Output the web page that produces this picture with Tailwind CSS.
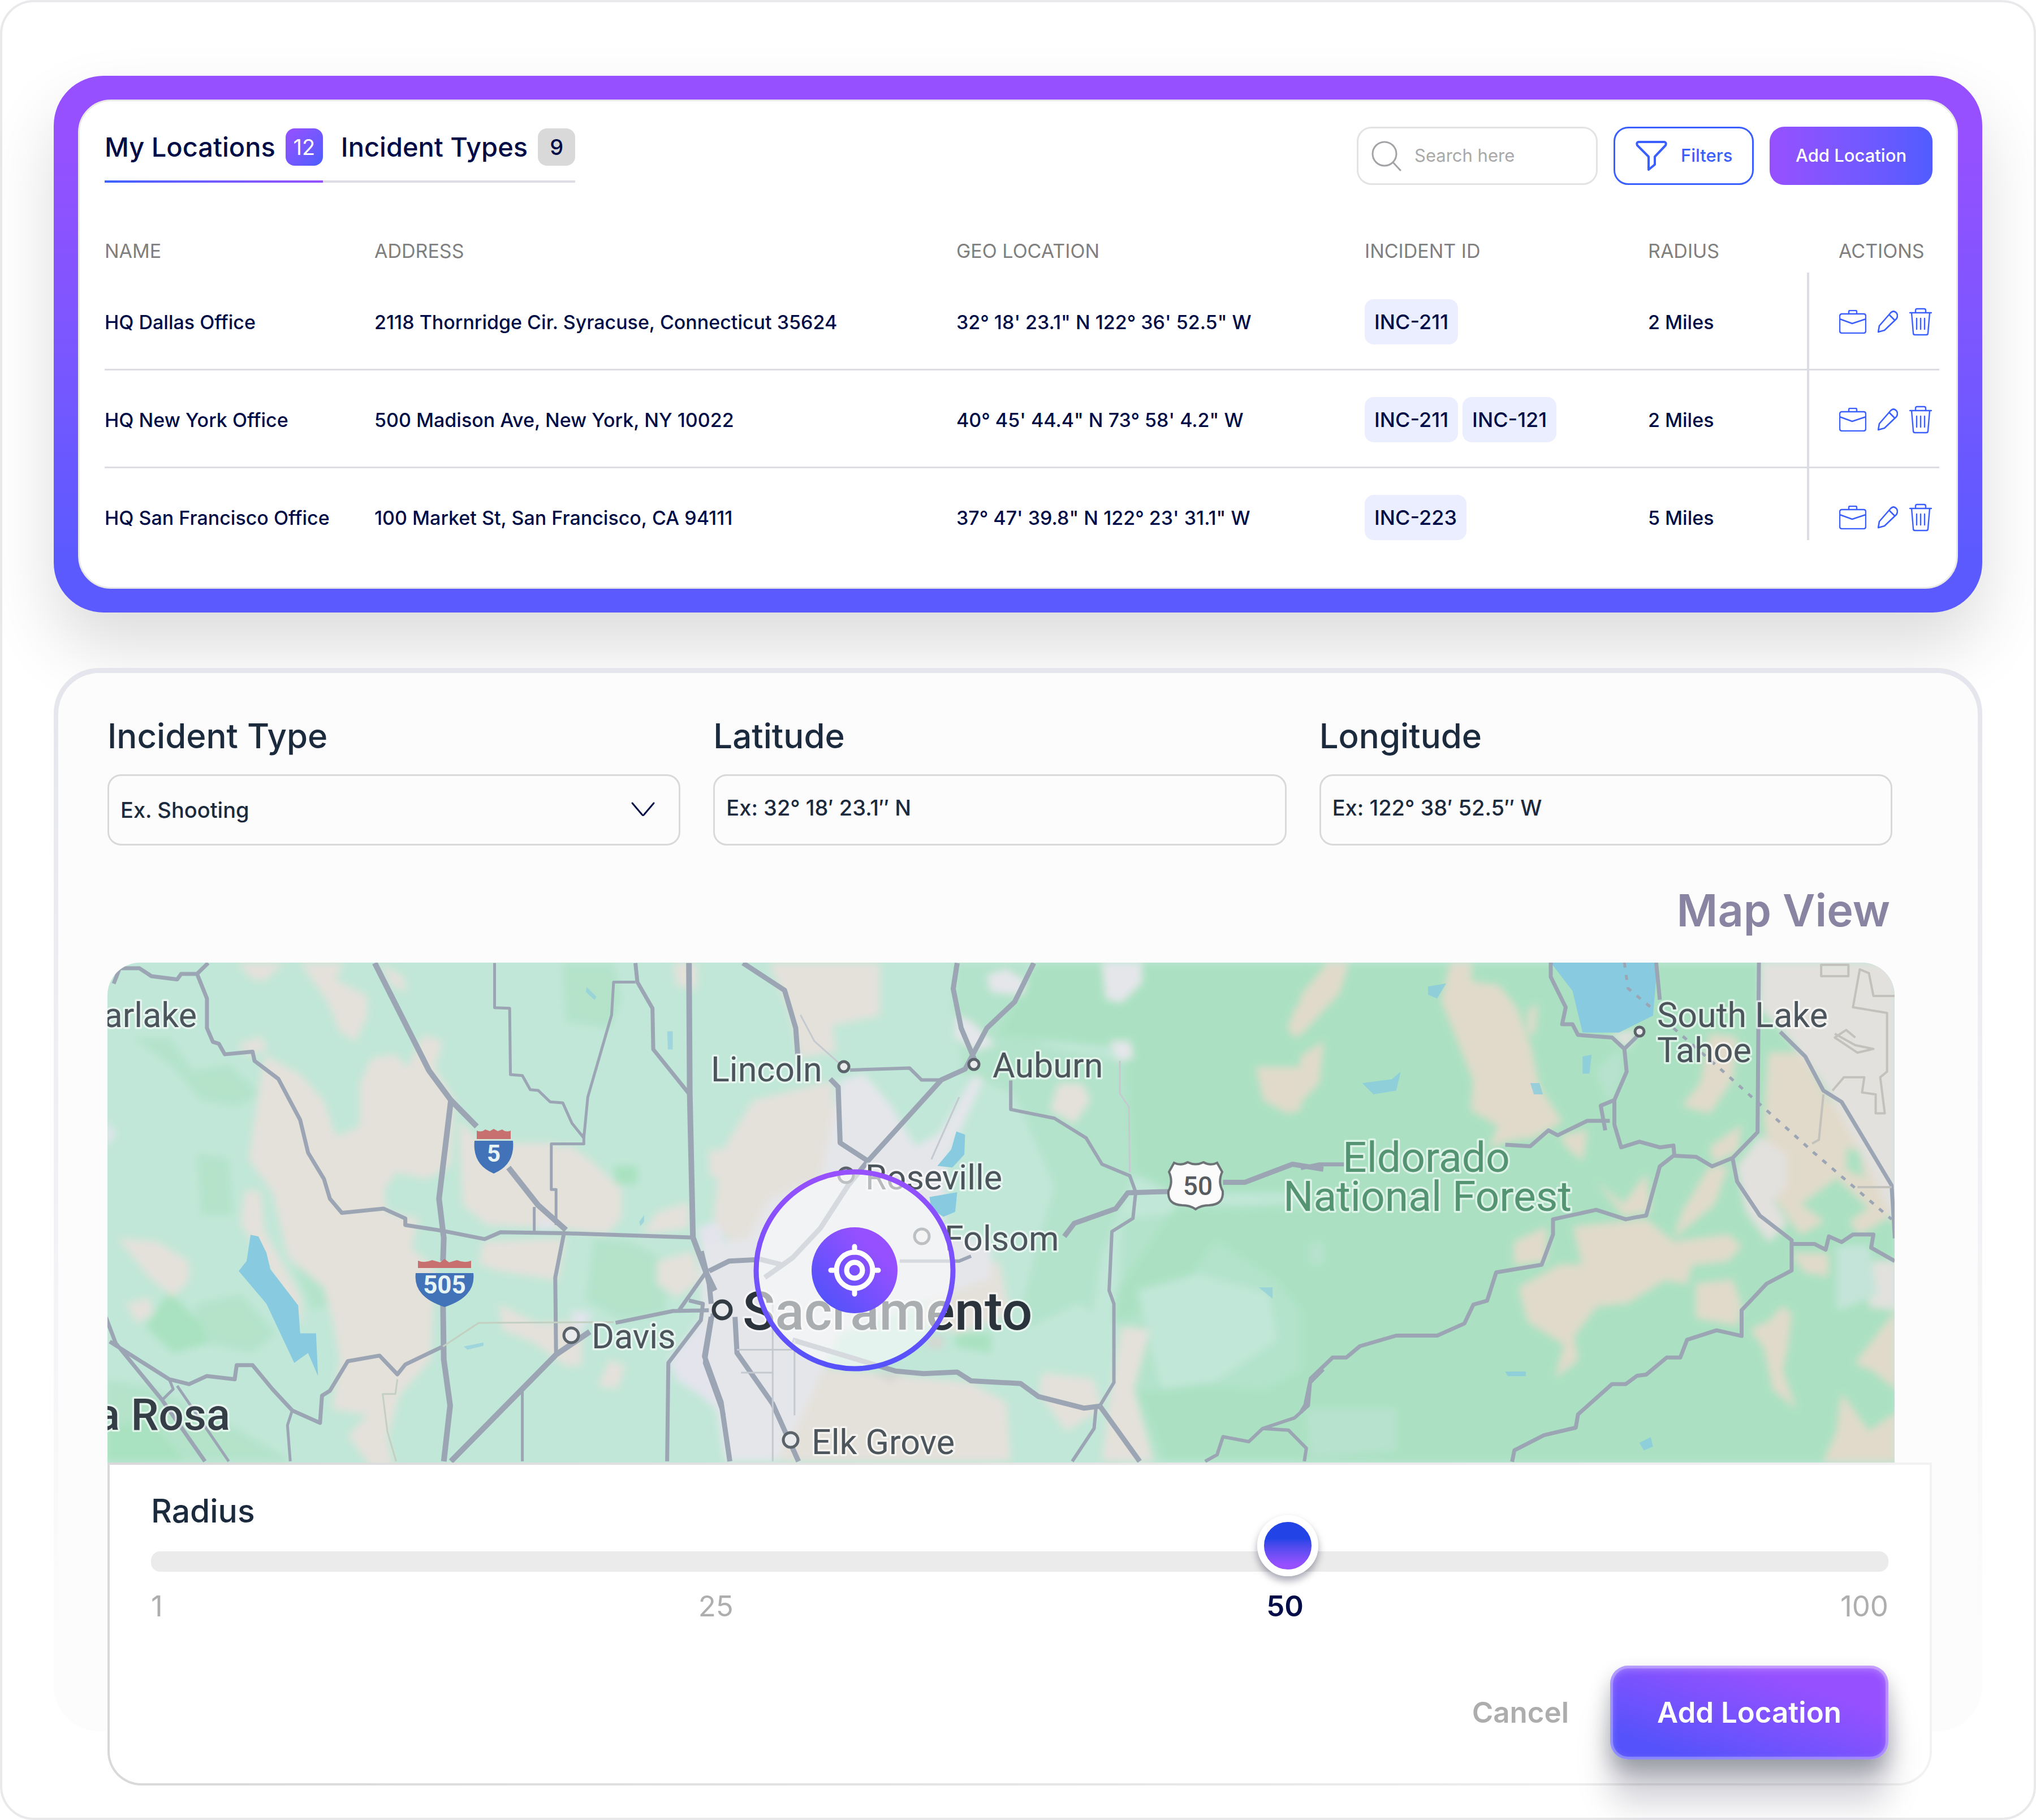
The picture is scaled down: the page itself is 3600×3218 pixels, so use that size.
<!DOCTYPE html>
<html lang="en">
<head>
    <meta charset="UTF-8">
    <meta name="viewport" content="width=device-width, initial-scale=1.0">
    <title>My Locations</title>
    <script src="https://cdn.jsdelivr.net/npm/@tailwindcss/browser@4"></script>
</head>
<body class="bg-white font-['Inter',sans-serif] text-[#000c47]">

    <!-- Shared icons -->
    <svg class="hidden">
        <symbol id="icon-case" viewBox="0 0 48 42">
            <path d="M17 6V3q0-2 2-2h10q2 0 2 2v3M5 7h38q4 0 4 4v26q0 4-4 4H5q-4 0-4-4V11q0-4 4-4zM1 16l22 8 24-8" fill="none" stroke="currentColor" stroke-width="2.4" stroke-linejoin="round"/>
        </symbol>
        <symbol id="icon-pencil" viewBox="0 0 36 40">
            <path d="M1 38l2-11L23 4q5-5 10 0 4 5 0 11L12 35zM21 8l9 9" fill="none" stroke="currentColor" stroke-width="2.6" stroke-linejoin="round"/>
        </symbol>
        <symbol id="icon-trash" viewBox="0 0 40 50">
            <path d="M1 9h38M11 9V5q0-3 3-3h12q3 0 3 3v4M4 9l3 36q0 3 3 3h20q3 0 3-3l3-36M13 19v19M20 19v19M27 19v19" fill="none" stroke="currentColor" stroke-width="2.4" stroke-linecap="round"/>
        </symbol>
    </svg>

    <div class="flex min-h-screen flex-col gap-[98px] rounded-[60px] border-4 border-[#e9e9ec] px-[91px] pt-[130px] pb-[153px]">

        <!-- Locations card -->
        <section class="rounded-[88px] bg-linear-to-b from-[#9750ff] from-10% to-[#5a5aff] to-90% px-[43px] py-[42px] shadow-[0_60px_120px_rgba(0,0,0,0.14)]">
            <div class="rounded-[58px] border-3 border-[#e8e8e8] bg-white pt-[45px] pr-[30px] pb-[83px] pl-[44px]">
                <div class="flex items-start justify-between pr-3">
                    <!-- Tabs -->
                    <div class="flex pt-[3px] text-[47px] leading-[66px] font-medium">
                        <button class="relative flex gap-[18px] border-b-3 border-transparent pb-[27px]">
                            My Locations
                            <span class="w-[66px] rounded-2xl bg-linear-to-br from-[#9750ff] to-[#4a5cff] text-center text-[38px] font-normal text-white">12</span>
                            <span class="absolute inset-x-0 -bottom-[3px] h-1 bg-linear-to-r from-[#3b62ff] to-[#9750ff]"></span>
                        </button>
                        <button class="flex gap-[18px] border-b-4 border-[#dcdce4] pb-[26px] pl-8">
                            Incident Types
                            <span class="w-[66px] rounded-2xl bg-[#d9d9d9] text-center text-[38px] font-medium">9</span>
                        </button>
                    </div>

                    <!-- Toolbar -->
                    <div class="flex h-[103px] gap-7 text-[31px]">
                        <label class="flex w-[426px] items-center gap-[23px] rounded-[26px] border-3 border-[#e3e3e3] pl-[22px]">
                            <svg class="h-[54px] w-[54px] shrink-0 text-[#a1a3a7]" viewBox="0 0 54 54" fill="none" stroke="currentColor" stroke-width="3" stroke-linecap="round">
                                <circle cx="24" cy="23" r="21"/>
                                <path d="M39 38l13 14"/>
                            </svg>
                            <input type="search" aria-label="Search" placeholder="Search here" class="w-full min-w-0 outline-none placeholder:text-[#a9a9a9]">
                        </label>
                        <button class="flex w-[248px] items-center gap-6 rounded-[26px] border-3 border-[#3b5fff] pl-[36px] font-medium text-[#3b5fff]">
                            <svg class="h-[54px] w-[56px]" viewBox="0 0 56 54" fill="none" stroke="currentColor" stroke-width="4" stroke-linejoin="round">
                                <path d="M5 2h46q4 1 2 6L34 28v14l-11 9V28L3 8q-2-5 2-6z"/>
                            </svg>
                            Filters
                        </button>
                        <button class="w-[288px] rounded-[26px] bg-linear-to-r from-[#9750ff] to-[#505cff] font-medium text-white">Add Location</button>
                    </div>
                </div>

                <table class="mt-[77px] w-full table-fixed border-separate border-spacing-0 text-left text-[34px] font-medium">
                    <thead>
                        <tr class="h-[78px] text-[#7f7f7f]">
                            <th class="w-[477px] font-normal">NAME</th>
                            <th class="font-normal">ADDRESS</th>
                            <th class="w-[722px] font-normal">GEO LOCATION</th>
                            <th class="w-[501px] font-normal">INCIDENT ID</th>
                            <th class="w-[281px] font-normal">RADIUS</th>
                            <th class="w-[234px] pl-[56px] font-normal">ACTIONS</th>
                        </tr>
                    </thead>
                    <tbody id="locations"></tbody>
                </table>
            </div>
        </section>

        <!-- Add location card -->
        <section class="rounded-[80px] bg-linear-to-b from-[#e5e5ed] to-[#fcfcfc] to-90% px-2 pt-[9px] pb-2">
            <div class="flex flex-col rounded-[72px] bg-[#fcfcfc] pt-[75px] pr-[81px] pl-[87px] text-[#1b2a3d]">
                <div class="mr-[70px] grid grid-cols-3 gap-[58px] text-[38px] font-medium">
                    <div>
                        <label for="incident-type" class="block text-[60px] leading-[72px]">Incident Type</label>
                        <div class="relative mt-8">
                            <select id="incident-type" class="h-[126px] w-full appearance-none rounded-[24px] border-3 border-[#d9d9d9] px-5 outline-none">
                                <option>Ex. Shooting</option>
                            </select>
                            <svg class="pointer-events-none absolute top-[48px] right-[44px] h-7 w-11" viewBox="0 0 44 28" fill="none" stroke="#000c47" stroke-width="3" stroke-linecap="round" stroke-linejoin="round">
                                <path d="M3 3l17 20q2 3 4 0L41 3"/>
                            </svg>
                        </div>
                    </div>
                    <div>
                        <label for="latitude" class="block text-[60px] leading-[72px]">Latitude</label>
                        <input id="latitude" type="text" placeholder="Ex: 32° 18′ 23.1″ N" class="mt-8 h-[126px] w-full rounded-[24px] border-3 border-[#d9d9d9] px-5 pb-2 outline-none placeholder:text-[#1b2a3d]">
                    </div>
                    <div>
                        <label for="longitude" class="block text-[60px] leading-[72px]">Longitude</label>
                        <input id="longitude" type="text" placeholder="Ex: 122° 38′ 52.5″ W" class="mt-8 h-[126px] w-full rounded-[24px] border-3 border-[#d9d9d9] px-5 pb-2 outline-none placeholder:text-[#1b2a3d]">
                    </div>
                </div>

                <h2 class="mt-[66px] mr-[74px] text-right text-[79px] leading-[96px] font-semibold text-[#8a84a3]">Map View</h2>

                <!-- Map -->
                <div class="mt-[45px] mr-[66px] overflow-hidden rounded-t-[58px]">
                    <svg class="block w-full" viewBox="0 0 3160 884" font-family="Roboto, sans-serif">
                        <defs>
                            <filter id="soft" x="-5%" y="-5%" width="110%" height="110%"><feGaussianBlur stdDeviation="7"/></filter>
                            <linearGradient id="pin" x1="1" y1="0" x2="0" y2="1">
                                <stop offset=".25" stop-color="#9750ff"/>
                                <stop offset=".85" stop-color="#5552fb"/>
                            </linearGradient>
                            <linearGradient id="ring" x1="0" y1="0" x2="0" y2="1">
                                <stop offset="0" stop-color="#9750ff"/>
                                <stop offset="1" stop-color="#5552fb"/>
                            </linearGradient>
                        </defs>
                        <rect width="3160" height="884" fill="#c1e7d8"/>

                        <!-- Land cover -->
                        <g filter="url(#soft)">
                            <g transform="matrix(.7015 0 0 .5804 -10 -12)">
                                <path fill="#b4e3ca" d="M80 250l90 0 60 100 90-20 80 90-60 40-90-20-70-100zM240 600l80 20 10 170-80 0zM490 780l110 40 20 230-90 30-40-120zM1160 22h130l20 110-30 90-110-20zM1240 860l90 10 100 60-10 160-110 20-90-60zM240 1060l110-30 90 120-60 60-150-40zM10 1290l100 20 230 130 140 100H10z"/>
                                <path fill="#a9e2c0" d="M110 1130l60-110 80 100 20 60-90 30zM10 1440l110-30 90 130H10zM1290 640h60v55h-55zM620 1250l60-15 10 40-50 5z"/>
                                <path fill="#e4e1da" d="M340 22h120l-50 55-30-5zM500 22h110l-20 50 80 50 0 60-30 80-40-30-30-90zM700 22l60 40 10 50-40-20zM340 270l60-25 20 40-50 20zM410 300l90 60 60 80 30 110 60-30 0-130 30-80 60-10 30 40 40-100 50 20-20 80 50 100-10 200-60 40-80-20-30 60 10 60 80 20-20 90 60 60-10 280-80 110-30 130 20 120-60-30-60-100 50-60-90-20 20-150-20-130-20-90-90-90-40-200-60-100zM360 715l40 0 10 120 90 200 10 90-40-70-70-140-50-100zM40 860l100 10 80 60 0 60-40 50-60-60zM60 1060l60-20 10 50-40 30zM900 500l50 60 100 10 60 0 30 0 30 20 0-20 60 50 80 90 0 90-40 50-120-20-180-10-60-60zM960 870l210-10-20 130-150-30-50-20zM1000 1060l100 60 110-10 0 140-40 0-80-70-80-40zM1280 1230l40 20-20 70-50-10zM1400 780l80-30v80l-120 20zM1440 22h60v80l-50-10zM1530 590l38 0v110l-38-40zM1400 930l90-30 20 90-60 50-50-40z"/>
                                <path fill="#e3e4ec" d="M10 500l25 40-25 50zM1500 830l68-30v600l-60-60-60-50-20-60 80-120 30-100zM1180 1080l60 10-40 60zM1110 790l40 40-50 5z"/>
                            </g>
                            <g transform="matrix(.7015 0 0 .5804 1050 -12)">
                                <path fill="#b4e3cb" d="M640 22h180l-40 200 110 60 180 40 20 350-80 240-50 360-110-20-40-200 80-350-100-280-160-80zM1060 800l500-60v800h-520z"/>
                                <path fill="#abe1c2" d="M840 22h728v700l-380 0-100-60-20-380-320-40zM1200 760l368 10v400l-120-180-150-120-60 100-120 110-80 40 10-100 110-200zM1100 1330l120-30 200 20 148-100v320h-400z"/>
                                <path fill="#c1e7d8" d="M340 210h300l20 130-160 130-120-130zM780 1160l170-100 90 60-10 160-150 10zM1100 1020l150-50 180 60 20 140-160 130-130 20z"/>
                                <path fill="#e4e1da" d="M170 22h280v160l-120 30 10 80-90 20-30-150zM130 440l200-60 10 180 80 70-80 60-80 30-20 170-140 20-70-110 20-200zM900 390l60 0 20 50-40 70-60-40zM640 950l110-20 30 160-130 60-110-40zM260 1250l420 50 90 60 10 180H200l-60-120zM1060 1130l70 10-40 180 50 220H1010l20-200zM860 1270l130 20 20 90-90 70-70-120z"/>
                                <path fill="#e5e6ea" d="M350 380l60-20 70 100 60 120 60-40 90-180 20 20-90 240-10 230 120 20 0 110-180 80-200 90-100 260-60 130H60L0 1100V880l120-20 50-120 130-60zM720 60l50-20 50 40-10 40-80-10zM1010 22h100v60l-50 60-40-10zM640 180l40 20 60 70-50 20-50-40zM1030 260l50 0 10 50-40 10z"/>
                                <path fill="#e1dacb" d="M1568 60l-70 100-20 60 20 30 70-80zM1568 280l-60 60-110 0 20 100 60 40 90-30V380l-30 20-30-20 20-30z"/>
                                <path fill="#d5d5d2" d="M570 1160h40v35h-40zM430 1270h80l-30 30z"/>
                                <path fill="#a9e2c0" d="M640 1150h90v60l-90-20z"/>
                            </g>
                            <g transform="matrix(.8036 0 0 .6696 2110 -142)">
                                <path fill="#abe1c2" d="M0 212h1310v1320H0z"/>
                                <path fill="#b7e2cd" d="M10 1390h200v110l-190 20zM20 950l30 0v60l-30 0zM650 500l50-60 10 60-30 90z"/>
                                <path fill="#e1dacb" d="M0 300l60-88h45l-20 80-85 110zM0 460l50-40-10 110-40 50zM330 212h45v50l60 10 40 60 30 100 20 110 50 90-60 40-60 10-40 20 20-60-60-40 5-80-40-120-30-90zM500 340l20-20-5 80-15 0zM570 670l60-15-10 80-30-30zM650 790l60 60 50-80 10 100-60 10zM900 750l40 0-30 100-90 90 20-70zM470 950l70-40 0 90-70 10zM600 910l160-20 60 60 120-20 30 30-30 40-80 10-10 50-50-10-80 60-70 10-50 80 10 60-50 50 20-90-80-60-20-90 90-60 50 0zM870 1060l80-10 20 70-10 50-90-20zM1060 1120l20 20-10 90-10 60 30 100-50-50-20-110-30-50 40-20zM1190 1350l60 100 60-50v130h-160l30-80zM1220 1270l90-140v210l-50-50zM900 400l60 10-10 110-50 90-60-20 40-60zM900 700l70-60-10 70-50 30zM1030 450l70 0 60 120 50 60 90 170 0 80-70 50-40-60-90 60-60-100-20-200zM1080 980l80 0 0 60-50-10z"/>
                                <path fill="#e2e1de" d="M1012 212h298v700l-60-160-100-220-90-140-50-60zM960 750l50-80 60 50 0 80-30 40 30 60-40 50-50-80zM1260 1000l50 0v130l-60-10zM680 400l60-10-20 50z"/>
                                <path fill="#c5e4d9" d="M1180 960h70l20 130-90 40z"/>
                                <path fill="#abe1c2" d="M1100 850l80-70 70 80-70 60zM1200 700l30 10 10 70-40-20z"/>
                            </g>
                        </g>

                        <!-- Water -->
                        <g fill="#88cadf">
                            <g transform="matrix(.7015 0 0 .5804 -10 -12)">
                                <path d="M375 850l20 5 20 50 10 50 70 110 5 85 40 0 5 130-25-70-35 30-70-180-70-100 20-30z"/>
                                <path opacity=".6" d="M912 1190l50-12v10l-40 12zM1222 95l25 30-5 10-22-25zM1425 230h14v55h-12zM1355 810l12-20v20l-10 14z"/>
                            </g>
                            <g transform="matrix(.7015 0 0 .5804 1050 -12)">
                                <path d="M643 535l22 10-2 60-30 40-38-5 35-50zM575 735l70-15-5 60-30 15-30-25z"/>
                                <path opacity=".6" d="M1405 1010l35 0v35z"/>
                            </g>
                            <g transform="matrix(.8036 0 0 .6696 2110 -142)">
                                <path d="M550 212h235l-10 140-75 45-80 0-22-110z"/>
                                <path opacity=".8" d="M280 275l40-8-20 40-20-10zM135 530l65-10 20-20-10 50-50 10zM505 530l20 0 8 30-20 0zM745 1480l25-15 5 25-20 10zM620 460l20-5-5 50-15 0zM450 1292l45 0v12l-40 0z"/>
                            </g>
                        </g>

                        <!-- Roads -->
                        <g fill="none" stroke="#9ba5b4" stroke-width="7" stroke-linejoin="round">
                            <g transform="matrix(.7015 0 0 .5804 -10 -12)">
                                <path vector-effect="non-scaling-stroke" d="M30 85L45 38H95L125 62 190 72 200 55H240L268 22M240 55L265 130V220L280 262 295 268 310 300 380 292 385 320 445 375 500 500 520 600 560 680 575 740 605 783 710 770 765 800V820L860 838 965 863 1005 842 1165 845 1485 858M1165 845L1143 980 1145 1210M1345 22L1350 80 1388 160 1390 285 1480 420M1295 1118L1440 1082 1530 1080M10 1100L35 1180 150 1350 260 1540M20 1175L170 1290 220 1305 265 1280 335 1290 340 1247 380 1247 430 1320 480 1385 550 1423 555 1340 575 1325 620 1235 700 1218 745 1275 765 1245 860 1190M1425 1540L1428 1240 1510 1110 1515 1060 1480 1050M1528 955L1455 1080M1540 1090L1520 1240 1568 1400"/>
                                <path vector-effect="non-scaling-stroke" stroke-width="10" d="M688 22L825 350 880 440 945 520M1025 645L1100 760 1170 835M880 440L850 740 862 860 860 930M860 1060L862 1230 878 1370 862 1540M880 1540L1145 1215 1230 1145M1480 22L1482 420 1490 858 1525 970 1545 1020"/>
                                <path vector-effect="non-scaling-stroke" stroke-width="5" d="M1345 80H1290L1285 180 1225 430 1215 555 1185 510 1162 448 1130 445 1100 410 1080 408 1060 365 1030 362 1028 160 990 158V22M1215 540V573H1133V712H1145V820M1090 765V840M480 1385L468 1430 475 1540M170 1290L180 1320 155 1350M190 1310L320 1540M1060 1320V1540"/>
                                <path vector-effect="non-scaling-stroke" stroke="#c3cfc0" stroke-width="3" d="M860 1190L950 1118 1290 1116M745 1290L740 1335 708 1335 720 1450 742 1540"/>
                            </g>
                            <g transform="matrix(.7015 0 0 .5804 1050 -12)">
                                <path vector-effect="non-scaling-stroke" stroke-width="9" d="M105 22L210 105 238 220 243 300M325 375L345 400 350 570 420 625 605 378 665 345 720 220 790 140 838 22M645 22L635 100 655 220 690 320M420 625L370 700 300 830 230 920 160 980M915 855L940 815 1045 770 1075 722 1180 718M1315 690H1370L1490 635 1568 650M85 1100L90 1210 180 1365 245 1540M25 1100L8 1220 50 1360 72 1540M0 900L20 1000 25 1060M230 1170L490 1265 560 1273 645 1268 680 1295 805 1303 850 1343 965 1378 1005 1372M1005 1372L1105 1540M20 960L70 930 150 925 200 940"/>
                                <path vector-effect="non-scaling-stroke" stroke-width="6" d="M375 348L525 342 555 378H605M780 380V468L890 495 970 555 1010 635 1080 670 1095 720 1088 800 1035 840 1028 1020 1040 1060V1300L1005 1370M995 1375L990 1440 935 1540M500 930H650L680 915M1568 1260L1535 1300 1530 1370 1495 1408 1415 1440 1380 1480 1315 1465 1300 1520 1270 1540M1415 1440L1480 1445 1525 1500 1520 1540"/>
                                <path vector-effect="non-scaling-stroke" stroke="#c4c9d0" stroke-width="3" d="M1055 320V420L1078 460 1080 660M235 1170V1400M90 1200H230M180 1050V1540M100 1270H180M250 180L285 260 350 330M650 430L580 620"/>
                            </g>
                            <g transform="matrix(.8036 0 0 .6696 2110 -142)">
                                <path vector-effect="non-scaling-stroke" d="M0 755L40 745H95M450 693L505 697 545 655 565 668 630 630 680 630M670 655L660 590 690 575 717 500 712 440 685 410 610 403 598 375H575L583 330 550 250V212M712 440L750 395M690 575V640L705 700 745 685 790 700 820 695 822 722 870 725 905 750 950 728 1005 660 1008 212M782 212L790 310M820 722L790 750 760 880 735 885 715 890 650 865 555 890V930L530 1010 430 1030 410 1105 380 1115 360 1165 300 1197H210L130 1225 100 1255H70L22 1310 10 1380 0 1400M950 728L960 790 1010 880 1080 945V1025L1025 1060 970 1130V1198L915 1183 850 1208 835 1255H805L760 1300 740 1303 715 1325H685L610 1405 605 1440 535 1460 470 1500 465 1530M1080 955H1130L1155 970 1162 935 1190 950 1215 930H1260L1255 965 1307 1000M1055 395L1110 460 1150 550 1190 580 1300 800 1307 940"/>
                                <path vector-effect="non-scaling-stroke" stroke-width="5" stroke-dasharray="9 13" d="M712 212L720 280 770 330M820 385L930 500 1130 715 1300 890"/>
                                <path vector-effect="non-scaling-stroke" stroke="#c2c1bb" stroke-width="4" d="M1145 218h60v30h-60zM1307 300H1260L1250 240 1230 230 1215 330 1290 345V500L1275 515 1285 610H1265V560L1235 555 1240 515H1195L1170 550M1175 400L1220 430 1260 440 1225 450 1175 410 1200 390 1220 410M1150 560L1140 680 1125 690M1225 805H1300"/>
                            </g>
                        </g>

                        <!-- Route shields -->
                        <g font-weight="700" text-anchor="middle">
                            <path fill="#c87070" d="M653 297q8 4 15-2l8 3 7-4 7 4 8-3q7 6 15 2v15h-60z"/>
                            <path fill="#4273b8" d="M649 315h68q4 42-34 58-38-16-34-58z"/>
                            <text x="683" y="352" font-size="42" fill="#e6f4f6">5</text>
                            <path fill="#c87070" d="M549 527q12 5 25-1l14 4 8-6 8 6 14-4q13 6 25 1v13h-94z"/>
                            <path fill="#4273b8" d="M545 549h102q5 42-51 60-56-18-51-60z"/>
                            <text x="596" y="585" font-size="44" fill="#e6f4f6">505</text>
                            <path fill="#fbfbfb" stroke="#6d7276" stroke-width="4" d="M1886 354q12 6 24-1 14 7 28 0 12 7 24 1l9 16q-8 18 1 34 2 24-24 25-14 0-24 7-10-7-24-7-26-1-24-25 9-16 1-34z"/>
                            <text x="1928" y="411" font-size="46" font-weight="500" fill="#555b60">50</text>
                        </g>

                        <!-- Place names -->
                        <g font-size="61" fill="#4c555c" stroke="#fff" stroke-opacity=".6" stroke-width="7" stroke-linejoin="round" paint-order="stroke">
                            <text x="158" y="114" text-anchor="end">arlake</text>
                            <text x="1067" y="210">Lincoln</text>
                            <text x="1565" y="203">Auburn</text>
                            <text x="1340" y="401">Roseville</text>
                            <text x="1480" y="509">Folsom</text>
                            <text x="1245" y="869">Elk Grove</text>
                            <text x="856" y="682">Davis</text>
                            <text x="2740" y="114">South Lake</text>
                            <text x="2740" y="176">Tahoe</text>
                            <text x="217" y="826" text-anchor="end" font-size="78" font-weight="500" fill="#353e46">a Rosa</text>
                            <text x="1123" y="649" font-size="95" font-weight="500" fill="#2b343c">Sacramento</text>
                            <text x="2184" y="370" font-size="75" fill="#549472">Eldorado</text>
                            <text x="2079" y="439" font-size="75" fill="#549472">National Forest</text>
                        </g>
                        <g fill="#e9eaec" stroke="#5b636a" stroke-width="5">
                            <circle cx="1302" cy="184" r="9"/>
                            <circle cx="1532" cy="180" r="9"/>
                            <circle cx="1306" cy="376" r="13"/>
                            <circle cx="1440" cy="484" r="13"/>
                            <circle cx="1208" cy="844" r="13"/>
                            <circle cx="820" cy="659" r="13"/>
                            <circle cx="2709" cy="122" r="8"/>
                            <circle cx="1087" cy="614" r="15" stroke="#333b43" stroke-width="7"/>
                        </g>

                        <!-- Radius pin -->
                        <circle cx="1321" cy="544" r="174" fill="#fafafa" fill-opacity=".62" stroke="url(#ring)" stroke-width="9"/>
                        <circle cx="1321" cy="544" r="76" fill="url(#pin)"/>
                        <g fill="none" stroke="#fff" stroke-width="9" stroke-linecap="round">
                            <circle cx="1321" cy="544" r="32"/>
                            <circle cx="1321" cy="544" r="14"/>
                            <path d="M1321 502v10M1321 576v10M1279 544h10M1353 544h10"/>
                        </g>
                    </svg>
                </div>

                <!-- Radius panel, hangs below the card -->
                <div class="-mb-[104px] rounded-b-[60px] bg-linear-to-r from-[#d9d9d9] to-[#f2f2f2] p-1">
                    <div class="rounded-b-[56px] bg-white px-[73px] pt-[46px] pb-[42px]">
                        <label for="radius" class="block text-[57px] leading-[72px] font-medium">Radius</label>
                        <input id="radius" type="range" min="0" max="1000" value="660" aria-valuetext="50" class="mt-[35px] block h-9 w-full appearance-none rounded-2xl bg-[#ebebeb] [&::-webkit-slider-runnable-track]:h-9 [&::-webkit-slider-thumb]:-mt-16 [&::-webkit-slider-thumb]:h-[108px] [&::-webkit-slider-thumb]:w-[108px] [&::-webkit-slider-thumb]:appearance-none [&::-webkit-slider-thumb]:rounded-full [&::-webkit-slider-thumb]:border-12 [&::-webkit-slider-thumb]:border-solid [&::-webkit-slider-thumb]:border-white [&::-webkit-slider-thumb]:bg-linear-to-b [&::-webkit-slider-thumb]:from-[#2244e6] [&::-webkit-slider-thumb]:from-35% [&::-webkit-slider-thumb]:to-[#9750ff] [&::-webkit-slider-thumb]:to-90% [&::-webkit-slider-thumb]:shadow-[0_8px_14px_rgba(0,0,40,0.35)]">
                        <div class="mt-[29px] flex text-[51px] leading-[64px] text-[#aeaeae]">
                            <span class="w-[31.5%]">1</span>
                            <span class="w-[32.7%]">25</span>
                            <span class="font-semibold text-[#000c47]">50</span>
                            <span class="ml-auto">100</span>
                        </div>
                        <div class="mt-[73px] flex items-center justify-end gap-[73px] text-[51px] font-semibold">
                            <button class="text-[#adadad]">Cancel</button>
                            <button class="h-[166px] w-[492px] rounded-[32px] bg-linear-to-tr from-[#5552fb] from-15% to-[#9750ff] to-75% text-white shadow-[0_20px_36px_rgba(0,10,30,0.28),0_76px_60px_rgba(0,0,40,0.18),inset_0_0_0_5px_rgba(255,255,255,0.25),inset_0_4px_16px_rgba(255,255,255,0.4)]">Add Location</button>
                        </div>
                    </div>
                </div>
            </div>
        </section>
    </div>

    <script>
        const locations = [
            { name: "HQ Dallas Office", address: "2118 Thornridge Cir. Syracuse, Connecticut 35624", geo: "32° 18' 23.1\" N 122° 36' 52.5\" W", ids: ["INC-211"], radius: "2 Miles" },
            { name: "HQ New York Office", address: "500 Madison Ave, New York, NY 10022", geo: "40° 45' 44.4\" N 73° 58' 4.2\" W", ids: ["INC-211", "INC-121"], radius: "2 Miles" },
            { name: "HQ San Francisco Office", address: "100 Market St, San Francisco, CA 94111", geo: "37° 47' 39.8\" N 122° 23' 31.1\" W", ids: ["INC-223"], radius: "5 Miles" }
        ];

        document.getElementById("locations").innerHTML = locations.map((row, i) => {
            // the last row has no rule below it
            const cell = i < locations.length - 1 ? "border-b-3 border-[#dcdce4] pt-[47px] pb-[43px]" : "pt-[47px]";
            return `
            <tr>
                <td class="${cell}">${row.name}</td>
                <td class="${cell}">${row.address}</td>
                <td class="${cell}">${row.geo}</td>
                <td class="${cell}">
                    <div class="flex gap-2">
                        ${row.ids.map(id => `<span class="rounded-2xl bg-[#ebeefe] px-[17px] text-[36px] leading-[80px]">${id}</span>`).join("")}
                    </div>
                </td>
                <td class="${cell}">${row.radius}</td>
                <td class="${cell} border-l-4 border-l-[#dcdce4] pl-[53px]">
                    <div class="flex items-center gap-5 text-[#3b5fff]">
                        <button aria-label="Open case"><svg class="block h-[42px] w-12"><use href="#icon-case"/></svg></button>
                        <button aria-label="Edit"><svg class="block h-10 w-9"><use href="#icon-pencil"/></svg></button>
                        <button aria-label="Delete"><svg class="block h-[50px] w-10"><use href="#icon-trash"/></svg></button>
                    </div>
                </td>
            </tr>`;
        }).join("");
    </script>

</body>
</html>
